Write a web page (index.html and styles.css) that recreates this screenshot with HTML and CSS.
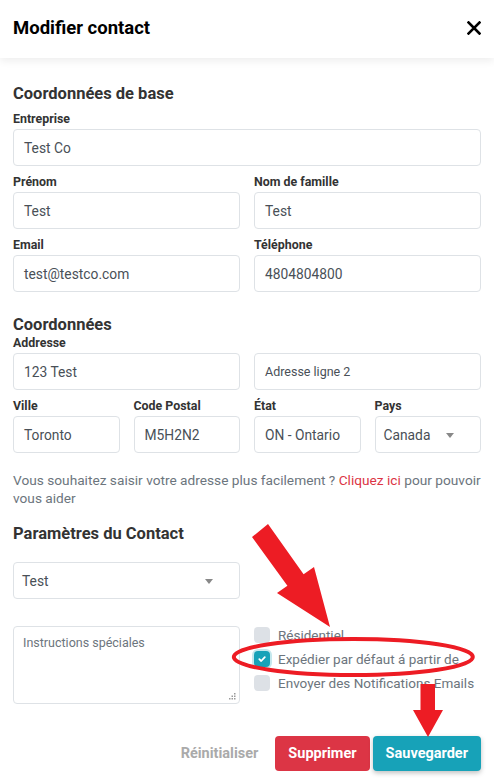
FILE: index.html
```html
<!DOCTYPE html>
<html lang="fr">
<head>
<meta charset="utf-8">
<title>Modifier contact</title>
<link rel="stylesheet" href="styles.css">
</head>
<body>
<div class="modal">
  <header class="modal-header">
    <h1 class="modal-title">Modifier contact</h1>
    <button class="close" type="button" aria-label="Fermer">
      <svg width="14" height="14" viewBox="0 0 14 14"><path d="M1.5 1.5 L12.5 12.5 M12.5 1.5 L1.5 12.5" stroke="#000" stroke-width="2.6" stroke-linecap="square"/></svg>
    </button>
  </header>

  <main class="modal-body">
    <section class="section">
      <h2 class="section-title">Coordonnées de base</h2>
      <div class="stack">
        <div class="field"><label class="label">Entreprise</label><div class="control">Test Co</div></div>
        <div class="grid-2">
          <div class="field"><label class="label">Prénom</label><div class="control">Test</div></div>
          <div class="field"><label class="label">Nom de famille</label><div class="control">Test</div></div>
        </div>
        <div class="grid-2">
          <div class="field"><label class="label">Email</label><div class="control">test@testco.com</div></div>
          <div class="field"><label class="label">Téléphone</label><div class="control">4804804800</div></div>
        </div>
      </div>
    </section>

    <section class="section section-address">
      <h2 class="section-title tight">Coordonnées</h2>
      <div class="stack">
        <div class="grid-2">
          <div class="field"><label class="label">Addresse</label><div class="control">123 Test</div></div>
          <div class="field"><label class="label">&nbsp;</label><div class="control placeholder-dark">Adresse ligne 2</div></div>
        </div>
        <div class="grid-4">
          <div class="field"><label class="label">Ville</label><div class="control">Toronto</div></div>
          <div class="field"><label class="label">Code Postal</label><div class="control">M5H2N2</div></div>
          <div class="field"><label class="label">État</label><div class="control">ON - Ontario</div></div>
          <div class="field"><label class="label">Pays</label><div class="control select">Canada<span class="caret"></span></div></div>
        </div>
      </div>
      <p class="help">Vous souhaitez saisir votre adresse plus facilement ? <span class="link">Cliquez ici</span> pour pouvoir<br>vous aider</p>
    </section>

    <section class="section section-settings">
      <h2 class="section-title spaced">Paramètres du Contact</h2>
      <div class="grid-2">
        <div class="control select">Test<span class="caret"></span></div>
      </div>
      <div class="grid-2 options-row">
        <div class="textarea">
          <span class="placeholder">Instructions spéciales</span>
          <svg class="grip" width="7" height="7" viewBox="0 0 7 7"><g fill="#999"><rect x="5" y="0" width="1.5" height="1.5"/><rect x="2.5" y="2.5" width="1.5" height="1.5"/><rect x="5" y="2.5" width="1.5" height="1.5"/><rect x="0" y="5" width="1.5" height="1.5"/><rect x="2.5" y="5" width="1.5" height="1.5"/><rect x="5" y="5" width="1.5" height="1.5"/></g></svg>
        </div>
        <ul class="checks">
          <li class="check"><span class="box"></span>Résidentiel</li>
          <li class="check"><span class="box checked"><svg width="10" height="10" viewBox="0 0 10 10"><path d="M2.3 5.2 L4.2 7 L7.8 3.2" fill="none" stroke="#fff" stroke-width="1.8" stroke-linecap="round" stroke-linejoin="round"/></svg></span>Expédier par défaut á partir de</li>
          <li class="check"><span class="box"></span>Envoyer des Notifications Emails</li>
        </ul>
      </div>
    </section>

    <footer class="actions">
      <button class="btn btn-link" type="button">Réinitialiser</button>
      <button class="btn btn-danger" type="button">Supprimer</button>
      <button class="btn btn-info" type="button">Sauvegarder</button>
    </footer>
  </main>

  <svg class="annotations" width="494" height="782" viewBox="0 0 494 782" aria-hidden="true">
    <polygon fill="#ed1c24" points="252,537 268,524 303.6,574.3 314,567 330,627 277,593 287.4,585.7"/>
    <ellipse cx="353.3" cy="657" rx="119.5" ry="18" fill="none" stroke="#ed1c24" stroke-width="4"/>
    <polygon fill="#ed1c24" points="420.5,684 435,684 435,710 443,710 428,737 413,710 420.5,710"/>
  </svg>
</div>
</body>
</html>
```

FILE: styles.css
```css
* { box-sizing: border-box; }

body {
  margin: 0;
  background: #fff;
  color: #333;
  font-family: Roboto, "Liberation Sans", Arial, sans-serif;
}

.modal {
  position: relative;
  width: 494px;
  min-height: 782px;
  background: #fff;
}

.modal-header {
  height: 58px;
  display: flex;
  align-items: center;
  justify-content: space-between;
  padding: 0 13px 3px;
  box-shadow: 0 3px 8px rgba(0, 0, 0, 0.07);
  position: relative;
}

.modal-title {
  margin: 0;
  font-size: 18.5px;
  font-weight: 700;
  color: #000;
}

.close {
  border: 0;
  background: none;
  padding: 0;
  width: 14px;
  height: 14px;
  display: flex;
  cursor: pointer;
}

.modal-body {
  padding: 26px 13px 0;
}

.section-title {
  margin: 0 0 7px;
  font-size: 16.5px;
  line-height: 20px;
  font-weight: 700;
  color: #333;
}

.section-title.tight { margin-bottom: 0; }
.section-title.spaced { margin-bottom: 18px; }

.section-address { margin-top: 23px; }
.section-settings { margin-top: 17px; }

.stack {
  display: flex;
  flex-direction: column;
  gap: 8px;
}

.grid-2 {
  display: grid;
  grid-template-columns: 1fr 1fr;
  column-gap: 14px;
}

.grid-4 {
  display: grid;
  grid-template-columns: repeat(4, 1fr);
  column-gap: 14px;
}

.label {
  display: block;
  font-size: 12.4px;
  line-height: 16px;
  font-weight: 700;
  color: #333;
  margin-bottom: 2px;
}

.control {
  position: relative;
  height: 37px;
  border: 1px solid #dee2e6;
  border-radius: 4px;
  padding: 0 10px;
  display: flex;
  align-items: center;
  font-size: 13.8px;
  color: #495057;
  white-space: nowrap;
  overflow: hidden;
}

.placeholder-dark { font-size: 12.5px; }

.control.select { padding-left: 8px; }

.caret {
  position: absolute;
  right: 26px;
  top: 50%;
  margin-top: -2px;
  width: 0;
  height: 0;
  border-left: 4px solid transparent;
  border-right: 4px solid transparent;
  border-top: 5px solid #888;
}

.help {
  margin: 18px 0 0;
  font-size: 13.7px;
  line-height: 18px;
  color: #6c757d;
}

.link { color: #dc3545; }

.options-row {
  margin-top: 24px;
  align-items: start;
}

.textarea {
  position: relative;
  margin-top: 3px;
  height: 78px;
  border: 1px solid #dee2e6;
  border-radius: 4px;
  padding: 8px 9px;
  font-size: 12.5px;
  color: #6c757d;
}

.grip {
  position: absolute;
  right: 3px;
  bottom: 3px;
}

.checks {
  list-style: none;
  margin: 0;
  padding: 0;
}

.check {
  height: 24px;
  display: flex;
  align-items: center;
  gap: 8px;
  font-size: 13.5px;
  color: #6c757d;
  white-space: nowrap;
}

.box {
  width: 16px;
  height: 16px;
  border-radius: 4px;
  background: #dde1e6;
  flex: none;
  display: flex;
  align-items: center;
  justify-content: center;
}

.box.checked {
  background: #17a2b8;
  box-shadow: 0 0 0 2px rgba(23, 162, 184, 0.25);
}

.actions {
  margin-top: 32px;
  display: flex;
  justify-content: flex-end;
  gap: 3px;
}

.btn {
  height: 35px;
  border: 0;
  border-radius: 4px;
  padding: 0 13px;
  font-family: inherit;
  font-size: 14.5px;
  font-weight: 700;
  color: #fff;
  cursor: pointer;
}

.btn-link {
  background: none;
  color: #aaa;
  padding: 0 4px;
  margin-right: 10px;
}

.btn-danger { background: #dc3545; }

.btn-info {
  background: #17a2b8;
  box-shadow: 0 2px 5px rgba(0, 0, 0, 0.25);
}

.annotations {
  position: absolute;
  top: 0;
  left: 0;
  pointer-events: none;
}
```
